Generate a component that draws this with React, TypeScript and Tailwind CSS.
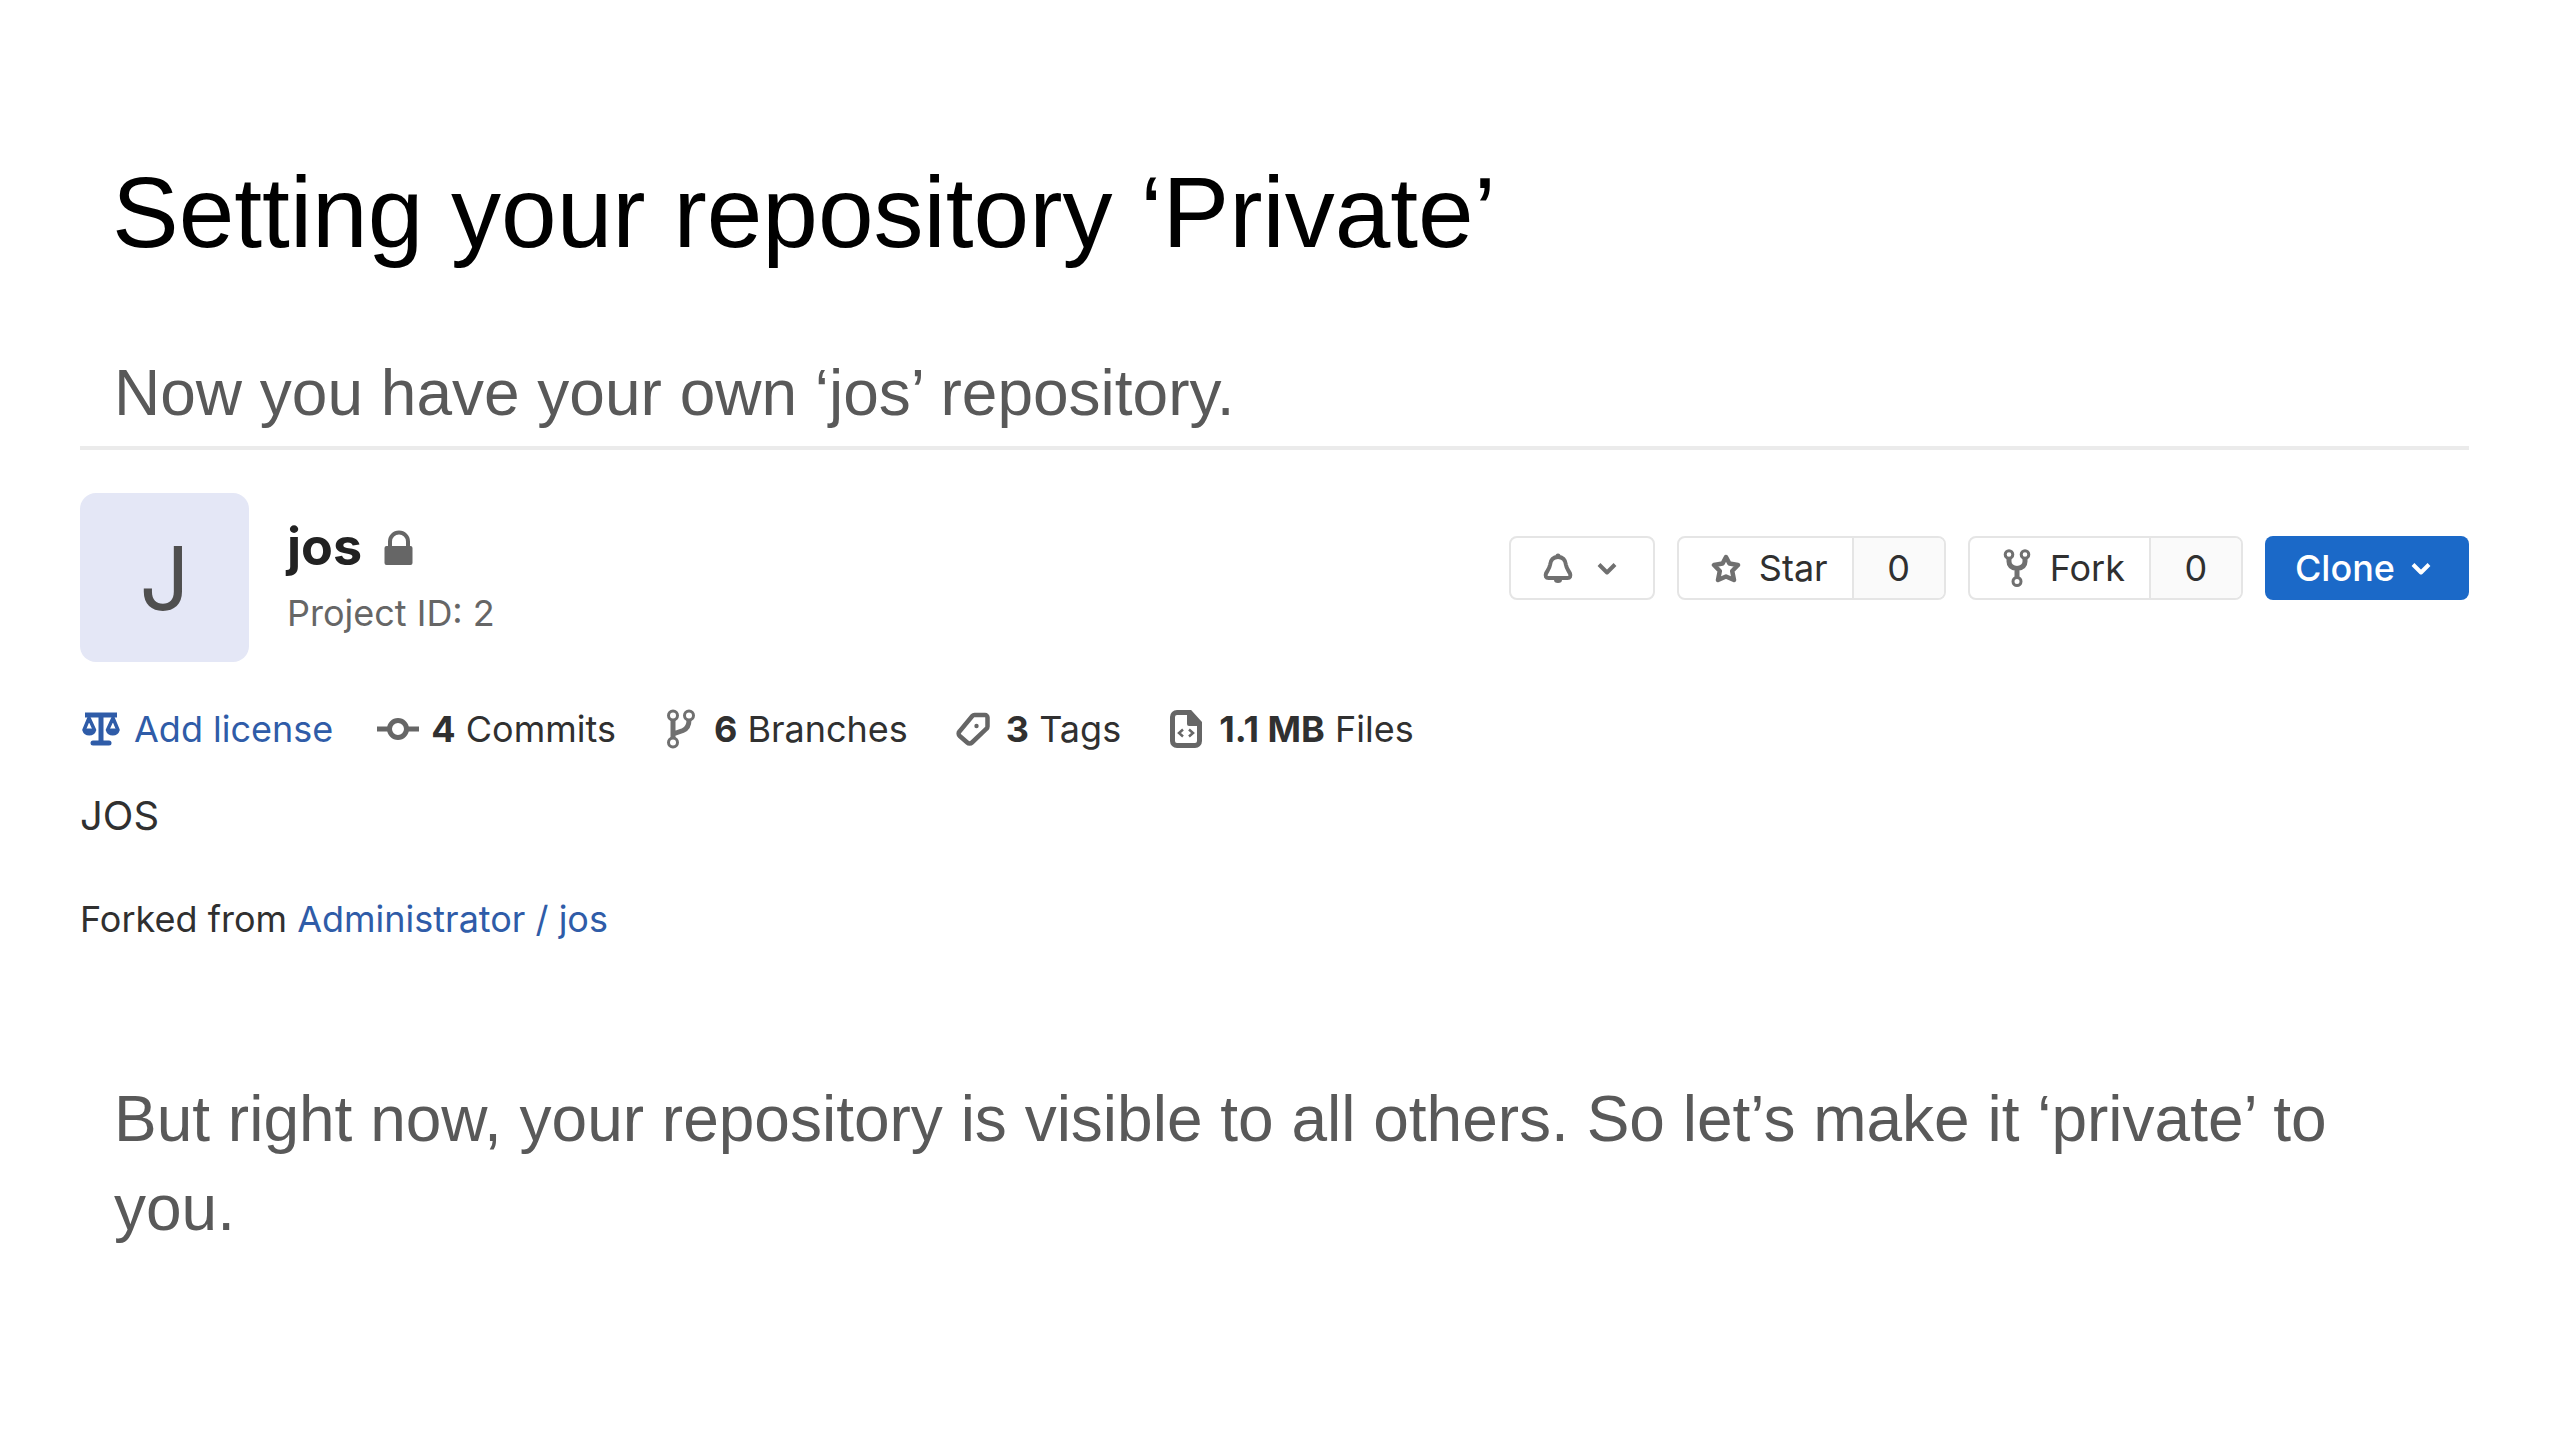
import type { ReactNode } from "react";

const LockIcon = () => (
  <svg className="w-[30px] h-9 text-[#666666]" viewBox="0 0 30 36" fill="none" aria-hidden="true">
    <path d="M6 18V12.500a9 9 0 0 1 18 0V18" stroke="currentColor" strokeWidth="4" />
    <path d="M2.500 17h24a2 2 0 0 1 2 2v15a2 2 0 0 1-2 2h-24a2 2 0 0 1-2-2V19a2 2 0 0 1 2-2z" fill="currentColor" />
  </svg>
);

const BellIcon = () => (
  <svg className="w-[30px] h-[30px] text-[#707070]" viewBox="0 0 30 30" fill="none" aria-hidden="true">
    <path
      d="M15 4C10 4 7.500 7.500 7 12C6.500 15.500 4.500 17.500 3 20.500C2 23 3 25 5.500 25h19c2.500 0 3.500-2 2.500-4.500C25.500 17.500 23.500 15.500 23 12C22.500 7.500 20 4 15 4z"
      stroke="currentColor"
      strokeWidth="4"
      strokeLinejoin="round"
    />
    <path d="M12.500 3a2.500 2.500 0 0 1 5 0zM11 27h8a4 3 0 0 1-8 0z" fill="currentColor" />
  </svg>
);

const ChevronIcon = () => (
  <svg className="w-5 h-4" viewBox="0 0 20 16" fill="none" aria-hidden="true">
    <path d="M2 4.500l8 8 8-8" stroke="currentColor" strokeWidth="4" strokeLinejoin="round" />
  </svg>
);

const StarIcon = () => (
  <svg className="w-[30px] h-[30px] text-[#707070]" viewBox="0 0 30 30" fill="none" aria-hidden="true">
    <path
      d="M15 4l3.400 6.500 8.600 1.500-5.800 6 1.800 9-8-3.500L7 27l1.800-9L3 12l8.600-1.500z"
      stroke="currentColor"
      strokeWidth="4.500"
      strokeLinejoin="round"
    />
  </svg>
);

const ForkIcon = () => (
  <svg className="w-[30px] h-[38px] text-[#707070]" viewBox="-2 0 30 38" fill="none" stroke="currentColor" aria-hidden="true">
    <g strokeWidth="3">
      <circle cx="5" cy="5.500" r="3.800" />
      <circle cx="21" cy="5.500" r="3.800" />
      <circle cx="13" cy="32.500" r="4" />
    </g>
    <path d="M5 9.500v3q0 6 8 7q8-1 8-7v-3M13 18.500V28" strokeWidth="5" />
  </svg>
);

const ScaleIcon = () => (
  <svg className="w-[42px] h-[34px]" viewBox="-2 0 42 34" fill="none" stroke="currentColor" aria-hidden="true">
    <path d="M3 3h32" strokeWidth="5" />
    <path d="M19 4v26" strokeWidth="5" />
    <path d="M11 31h16" strokeWidth="5" strokeLinecap="round" />
    <path d="M7 6l-5 12a5.500 5.500 0 0 0 10.500 0zM31 6l-5.500 12a5.500 5.500 0 0 0 10.500 0z" strokeWidth="3.500" strokeLinejoin="round" />
    <path d="M2 17h10.500a5.500 6 0 0 1-10.500 0zM25.500 17H36a5.500 6 0 0 1-10.500 0z" fill="currentColor" strokeWidth="1" />
  </svg>
);

const CommitIcon = () => (
  <svg className="w-[42px] h-6 text-[#666666]" viewBox="0 0 42 24" fill="none" stroke="currentColor" strokeWidth="5" aria-hidden="true">
    <circle cx="21" cy="12" r="8.500" />
    <path d="M0 12h12.500M29.500 12H42" />
  </svg>
);

const BranchIcon = () => (
  <svg className="w-[42px] h-10 text-[#707070]" viewBox="-6 0 42 40" fill="none" stroke="currentColor" aria-hidden="true">
    <g strokeWidth="3">
      <circle cx="7" cy="6.500" r="4.500" />
      <circle cx="23" cy="6.500" r="4.500" />
      <circle cx="7" cy="33.500" r="4.500" />
    </g>
    <path d="M7 11v18M23 11q0 8-6 10.500L7 25" strokeWidth="5" />
  </svg>
);

const TagIcon = () => (
  <svg className="w-[42px] h-[34px] text-[#666666]" viewBox="-4 0 42 34" fill="none" aria-hidden="true">
    <path
      d="M18.500 3h10.500a2.500 2.500 0 0 1 2.500 2.500v9a3 3 0 0 1-1 2.200L16 30.500a3.500 3.500 0 0 1-4.800 0l-7.500-6.500a3.200 3.200 0 0 1-.2-4.600L16.300 4a3 3 0 0 1 2.200-1z"
      stroke="currentColor"
      strokeWidth="4.500"
    />
    <circle cx="20.500" cy="14" r="2.200" fill="currentColor" />
  </svg>
);

const FileIcon = () => (
  <svg className="w-[42px] h-[38px] text-[#666666]" viewBox="-5 0 42 38" fill="none" aria-hidden="true">
    <path d="M7 2.500h13L29.500 13v18a4.500 4.500 0 0 1-4.500 4.500H7A4.500 4.500 0 0 1 2.500 31V7A4.500 4.500 0 0 1 7 2.500z" stroke="currentColor" strokeWidth="5" />
    <path d="M17 2h4l9 10v4H19a2 2 0 0 1-2-2z" fill="currentColor" />
    <path d="M13 19.500l-4 3.500 4 3.500M19 19.500l4 3.500-4 3.500" stroke="currentColor" strokeWidth="2.500" />
  </svg>
);

const Stat = ({ icon, value, label }: { icon: ReactNode; value: string; label: string }) => (
  <div className="flex items-center gap-3">
    {icon}
    <span>
      <strong className="font-bold">{value}</strong> {label}
    </span>
  </div>
);

const CountButton = ({ icon, label, count }: { icon: ReactNode; label: string; count: number }) => (
  <div className="flex h-16 rounded-lg border-2 border-[#e5e5e5] overflow-hidden">
    <button type="button" className="flex items-center gap-[18px] pl-8 pr-6">
      {icon}
      {label}
    </button>
    <a href="#" className="flex items-center justify-center w-[92px] border-l-2 border-[#e5e5e5] bg-[#fafafa]">
      {count}
    </a>
  </div>
);

const App = () => {
  return (
    <main className="min-h-screen bg-white pl-20 pr-[91px] pt-[162px] font-['Liberation_Sans',Arial,sans-serif]">
      <h1 className="px-8 text-[100px] leading-[100px] text-black">Setting your repository ‘Private’</h1>
      <p className="mt-[87px] px-[34px] text-[64px] leading-[89px] text-[#595959]">
        Now you have your own ‘jos’ repository.
      </p>

      <section className="mt-2 border-t-4 border-[#ebebeb] pt-[43px] font-[Inter,sans-serif] text-[36px] leading-[48px] text-[#303030]">
        <div className="flex items-center justify-between">
          <div className="flex items-center gap-[38px]">
            <div className="flex items-center justify-center size-[169px] rounded-2xl bg-[#e4e7f6] text-[88px] text-[#4f4f4f]">
              J
            </div>
            <div>
              <div className="flex items-center gap-[22px]">
                <h2 className="text-[52px] leading-[56px] font-bold text-[#222222]">jos</h2>
                <LockIcon />
              </div>
              <p className="mt-[14px] text-[#666666]">Project ID: 2</p>
            </div>
          </div>

          <div className="flex items-center gap-[22px] mb-5">
            <button
              type="button"
              aria-label="Notification settings"
              className="flex items-center gap-6 h-16 pl-8 pr-9 rounded-lg border-2 border-[#e5e5e5] text-[#707070]"
            >
              <BellIcon />
              <ChevronIcon />
            </button>
            <CountButton icon={<StarIcon />} label="Star" count={0} />
            <CountButton icon={<ForkIcon />} label="Fork" count={0} />
            <button
              type="button"
              className="flex items-center gap-4 h-16 pl-[30px] pr-[38px] rounded-lg bg-[#1b69c8] font-medium text-white"
            >
              Clone
              <ChevronIcon />
            </button>
          </div>
        </div>

        <div className="mt-[43px] flex items-center gap-11">
          <a href="#" className="flex items-center gap-3 text-[#2f5ca8]">
            <ScaleIcon />
            Add license
          </a>
          <Stat icon={<CommitIcon />} value="4" label="Commits" />
          <Stat icon={<BranchIcon />} value="6" label="Branches" />
          <Stat icon={<TagIcon />} value="3" label="Tags" />
          <Stat icon={<FileIcon />} value="1.1 MB" label="Files" />
        </div>
        <p className="mt-[39px] text-[40px]">JOS</p>
        <p className="mt-[55px]">
          Forked from{" "}
          <a href="#" className="text-[#2f5ca8]">
            Administrator / jos
          </a>
        </p>
      </section>

      <p className="mt-[132px] px-[34px] text-[64px] leading-[89px] text-[#595959]">
        But right now, your repository is visible to all others. So let’s make it ‘private’ to you.
      </p>
    </main>
  );
};

export default App;
